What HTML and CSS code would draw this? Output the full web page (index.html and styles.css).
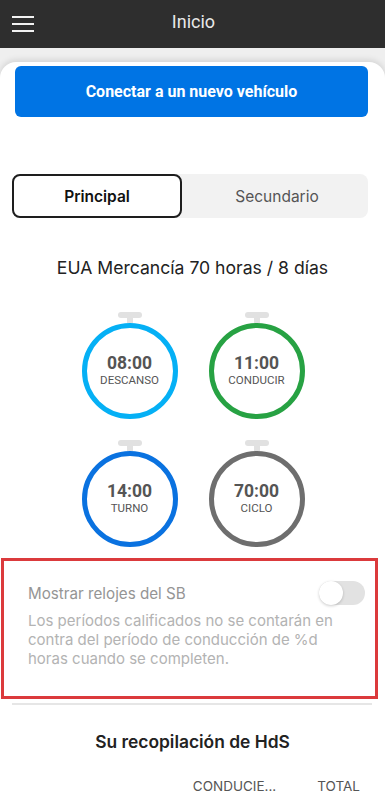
FILE: index.html
```html
<!DOCTYPE html>
<html lang="es">
<head>
<meta charset="utf-8">
<title>Inicio</title>
<link rel="stylesheet" href="styles.css">
</head>
<body>
<header class="topbar">
  <button class="menu" aria-label="Menú">
    <span></span><span></span><span></span>
  </button>
  <h1 class="title">Inicio</h1>
</header>
<main class="card">
  <button class="connect">Conectar a un nuevo vehículo</button>

  <div class="segmented">
    <div class="seg active">Principal</div>
    <div class="seg">Secundario</div>
  </div>

  <h2 class="rule">EUA Mercancía 70 horas / 8 días</h2>

  <div class="clocks">
    <div class="clock">
      <div class="knob"></div><div class="stem"></div>
      <div class="dial rest"><span class="time">08:00</span><span class="label">DESCANSO</span></div>
    </div>
    <div class="clock">
      <div class="knob"></div><div class="stem"></div>
      <div class="dial drive"><span class="time">11:00</span><span class="label">CONDUCIR</span></div>
    </div>
    <div class="clock">
      <div class="knob"></div><div class="stem"></div>
      <div class="dial shift"><span class="time">14:00</span><span class="label">TURNO</span></div>
    </div>
    <div class="clock">
      <div class="knob"></div><div class="stem"></div>
      <div class="dial cycle"><span class="time">70:00</span><span class="label">CICLO</span></div>
    </div>
  </div>

  <section class="sb">
    <div class="sb-row">
      <span class="sb-title">Mostrar relojes del SB</span>
      <span class="toggle"><span class="thumb"></span></span>
    </div>
    <p class="sb-desc">Los períodos calificados no se contarán en contra del período de conducción de %d horas cuando se completen.</p>
  </section>

  <hr class="divider">

  <h2 class="summary">Su recopilación de HdS</h2>
  <div class="cols">
    <span class="col-a">CONDUCIE...</span>
    <span class="col-b">TOTAL</span>
  </div>
</main>
</body>
</html>
```

FILE: styles.css
```css
* { box-sizing: border-box; }
html, body { margin: 0; padding: 0; }
body {
  background: #efefef;
  font-family: Roboto, "Liberation Sans", sans-serif;
  width: 385px;
  height: 796px;
  overflow: hidden;
}

.topbar {
  height: 48px;
  background: #2e2e2e;
  display: flex;
  align-items: center;
}
.menu {
  width: 22px;
  height: 16px;
  margin-left: 12px;
  padding: 0;
  border: 0;
  background: none;
  display: flex;
  flex-direction: column;
  justify-content: space-between;
}
.menu span {
  display: block;
  height: 2px;
  width: 22px;
  background: #f2f2f2;
}
.title {
  margin: 0 0 0 -32px;
  flex: 1;
  text-align: center;
  color: #e8e8e8;
  font-weight: 400;
  font-size: 18px;
  padding-bottom: 6px;
}

.card {
  margin-top: 14px;
  background: #fff;
  border-radius: 16px 16px 0 0;
  box-shadow: 0 -2px 6px rgba(0,0,0,0.12);
  padding-top: 4px;
  height: 734px;
  display: flex;
  flex-direction: column;
}

.connect {
  margin: 0 17px 0 15px;
  height: 51px;
  border: 0;
  border-radius: 6px;
  background: #0074e4;
  color: #fff;
  font-family: Roboto, "Liberation Sans", sans-serif;
  font-weight: 700;
  font-size: 16px;
}

.segmented {
  margin: 57px 17px 0 12px;
  height: 44px;
  display: flex;
  background: #f2f2f2;
  border-radius: 8px;
  font-family: Inter, "Liberation Sans", sans-serif;
  font-size: 15.5px;
}
.seg {
  flex: 1;
  display: flex;
  align-items: center;
  justify-content: center;
  color: #555;
  padding-left: 4px;
}
.seg.active {
  flex: 0 0 170px;
  background: #fff;
  border: 2px solid #1e1e1e;
  border-radius: 8px;
  color: #111;
  font-weight: 600;
  padding-left: 0;
}

.rule {
  margin: 38px 0 0;
  text-align: center;
  font-family: Inter, "Liberation Sans", sans-serif;
  font-weight: 400;
  font-size: 17.6px;
  line-height: 24px;
  color: #222;
}

.clocks {
  margin: 32px auto 0;
  display: grid;
  grid-template-columns: 96px 96px;
  column-gap: 31px;
  row-gap: 21px;
  justify-content: center;
  padding-left: 1px;
}
.clock {
  display: flex;
  flex-direction: column;
  align-items: center;
}
.knob {
  width: 24px;
  height: 6px;
  border-radius: 3px;
  background: #e1e1e1;
}
.stem {
  width: 6px;
  height: 5px;
  background: #e1e1e1;
}
.dial {
  width: 96px;
  height: 96px;
  border-radius: 50%;
  border: 5px solid #888;
  display: flex;
  flex-direction: column;
  align-items: center;
  justify-content: center;
  color: #555;
  padding-bottom: 2px;
}
.dial.rest { border-color: #05b0f5; }
.dial.drive { border-color: #27a243; }
.dial.shift { border-color: #0a72e0; }
.dial.cycle { border-color: #6e6e6e; }
.time {
  font-weight: 700;
  font-size: 17.5px;
  line-height: 20px;
}
.label {
  font-size: 11.5px;
  line-height: 15px;
}

.sb {
  margin: 11px 7px 0 1px;
  border: 3px solid #db3a3c;
  height: 141px;
  padding: 20px 10px 0 24px;
  font-family: Inter, "Liberation Sans", sans-serif;
}
.sb-row {
  display: flex;
  align-items: center;
  justify-content: space-between;
  height: 24px;
}
.sb-title {
  color: #959595;
  font-size: 15.2px;
}
.toggle {
  width: 46px;
  height: 24px;
  border-radius: 12px;
  background: #e2e2e2;
  display: flex;
  align-items: center;
}
.thumb {
  width: 24px;
  height: 24px;
  border-radius: 50%;
  background: #fff;
  box-shadow: 0 1px 3px rgba(0,0,0,0.2);
}
.sb-desc {
  margin: 6px 16px 0 0;
  color: #b3b3b3;
  font-size: 15px;
  line-height: 19px;
}

.divider {
  margin: 4px 13px 0 12px;
  border: 0;
  height: 2px;
  background: #e6e6e6;
}

.summary {
  margin: 25px 0 0;
  text-align: center;
  font-family: Inter, "Liberation Sans", sans-serif;
  font-weight: 600;
  font-size: 17.4px;
  line-height: 24px;
  color: #222;
}
.cols {
  margin-top: 24px;
  display: flex;
  justify-content: flex-end;
  gap: 41px;
  padding-right: 25px;
  font-family: Inter, "Liberation Sans", sans-serif;
  font-size: 13.5px;
  color: #555;
}
```
